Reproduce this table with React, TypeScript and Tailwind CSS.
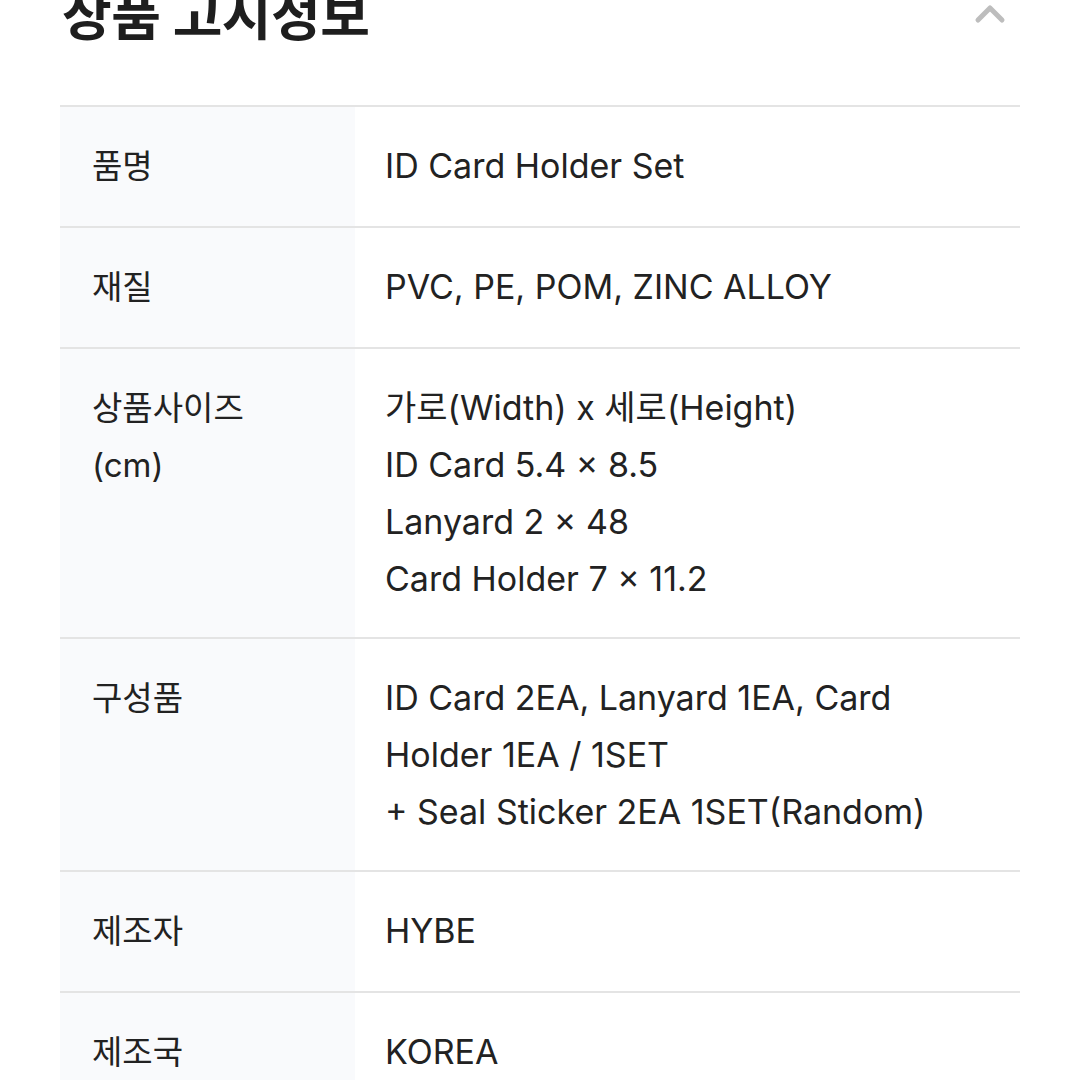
import { ChevronUp } from 'lucide-react';

const rows: { label: string[]; value: string[] }[] = [
  { label: ['품명'], value: ['ID Card Holder Set'] },
  { label: ['재질'], value: ['PVC, PE, POM, ZINC ALLOY'] },
  {
    label: ['상품사이즈', '(cm)'],
    value: ['가로(Width) x 세로(Height)', 'ID Card 5.4 × 8.5', 'Lanyard 2 × 48', 'Card Holder 7 × 11.2'],
  },
  {
    label: ['구성품'],
    value: ['ID Card 2EA, Lanyard 1EA, Card', 'Holder 1EA / 1SET', '+ Seal Sticker 2EA 1SET(Random)'],
  },
  { label: ['제조자'], value: ['HYBE'] },
  { label: ['제조국'], value: ['KOREA'] },
];

export default function App() {
  return (
    <div
      className="w-[1080px] h-[1080px] overflow-hidden bg-white text-[#222]"
      style={{ fontFamily: 'Inter, "Noto Sans CJK KR", sans-serif' }}
    >
      {/* Header */}
      <div className="flex items-start justify-between px-[60px] -mt-[20px]">
        <h1 className="text-[54px] font-bold leading-[74px] tracking-[-0.5px] text-[#1e1e1e] pl-[2px]">상품 고시정보</h1>
        <ChevronUp className="w-[48px] h-[48px] text-[#bdbdbd] mt-[10px] mr-[6px]" strokeWidth={2.5} />
      </div>

      {/* Table */}
      <div className="mx-[60px] mt-[51px] border-t-2 border-[#e4e4e4]">
        {rows.map((row, i) => (
          <div key={i} className="flex min-h-[121px] border-b-2 border-[#e4e4e4]">
            <div className="w-[295px] shrink-0 bg-[#f9fafc] pl-[32px] py-[31px] text-[33px] leading-[57px]">
              {row.label.map((l, j) => (
                <div key={j}>{l}</div>
              ))}
            </div>
            <div className="flex-1 pl-[30px] py-[30px] text-[34px] leading-[57px]">
              {row.value.map((v, j) => (
                <div key={j}>{v}</div>
              ))}
            </div>
          </div>
        ))}
      </div>
    </div>
  );
}
